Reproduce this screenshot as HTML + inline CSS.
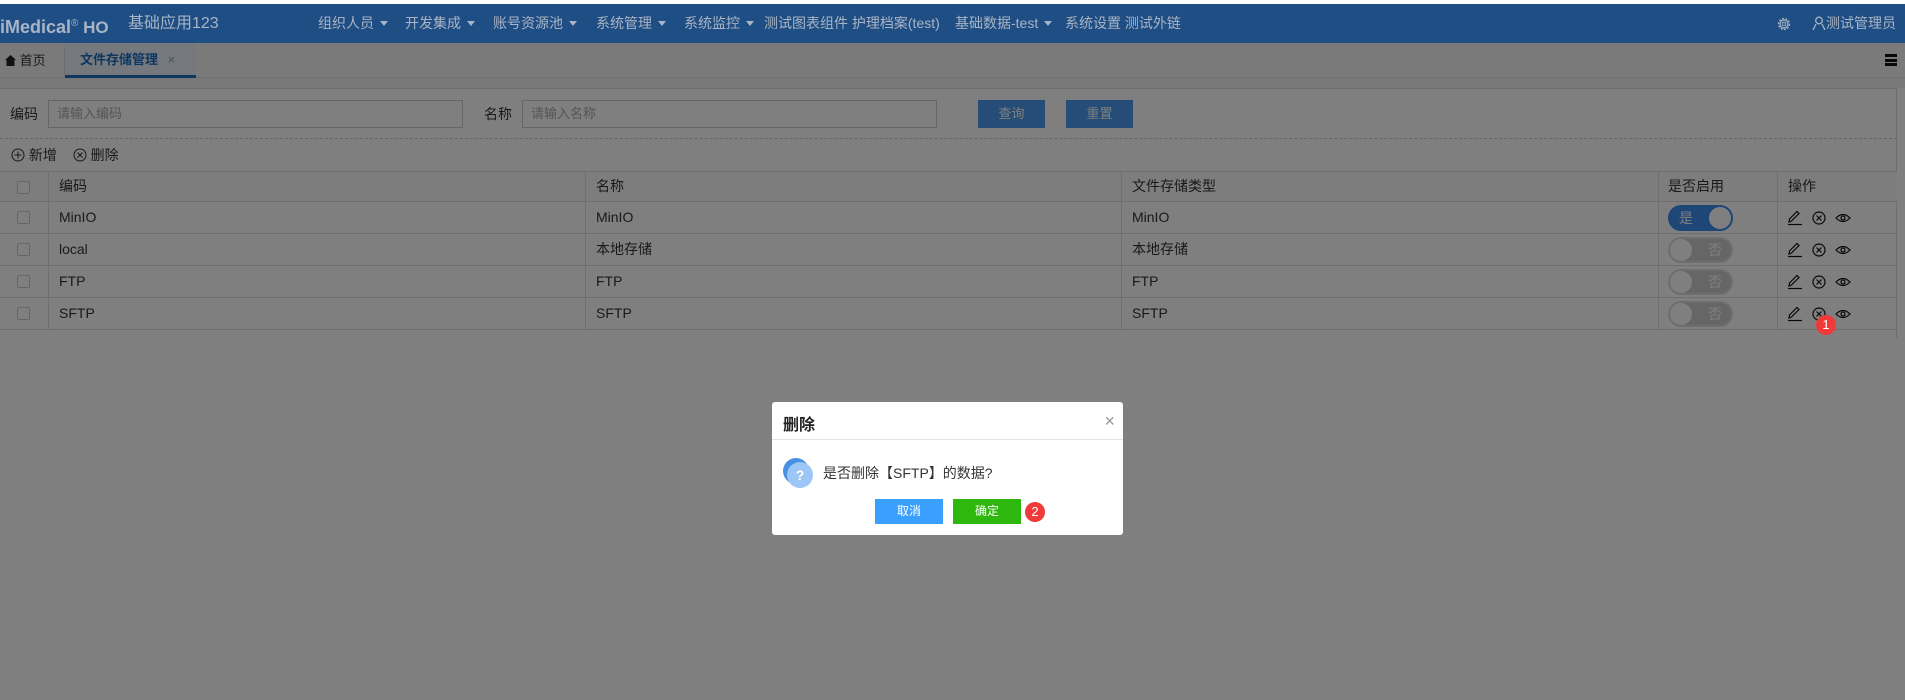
<!DOCTYPE html>
<html><head><meta charset="utf-8"><style>
*{margin:0;padding:0;box-sizing:border-box}
body{width:1905px;height:700px;position:relative;overflow:hidden;background:#fff;font-family:"Liberation Sans","Noto Sans CJK SC",sans-serif;font-size:13px;color:#333}
.a{position:absolute}
.hdr{left:0;top:4px;width:1905px;height:39px;background:#1f4e85;z-index:10}
.nav{top:4px;height:39px;line-height:39px;color:#a9b4c4;font-size:14px;white-space:nowrap;z-index:11}
.tri{display:inline-block;border-left:4px solid transparent;border-right:4px solid transparent;border-top:5px solid #a9b4c4;margin-left:6px;vertical-align:2px}
.tabbar{left:0;top:43px;width:1905px;height:35px;background:#f4f4f4;border-bottom:1px solid #e5e5e5}
.inp{height:28px;border:1px solid #ccc;background:#fff;color:#aaa;padding-left:8px;line-height:26px;font-size:13px}
.btn{height:28px;background:#4a9af0;color:#fff;text-align:center;line-height:28px;font-size:13px}
.row{left:0;width:1897px;height:32px;border-bottom:1px solid #ddd;line-height:31px;font-size:14px}
.cell{position:absolute;top:0;height:100%}
.cb{position:absolute;left:17px;top:9px;width:13px;height:13px;border:1px solid #ccc;background:#fff;border-radius:2px}
.vl{position:absolute;top:0;width:1px;height:100%;background:#ddd}
.tog{position:absolute;left:1668px;top:3px;width:65px;height:26px;border-radius:13px}
.ov{left:0;top:0;width:1905px;height:700px;background:rgba(0,0,0,.5);z-index:5}
</style></head><body>
<div class="a" style="left:0;top:0;width:1905px;height:4px;background:#fff;z-index:10"></div>
<div class="a hdr"></div>
<div class="a nav" style="left:0;font-weight:bold;font-size:18px">iMedical<sup style="font-size:10px;font-weight:normal">®</sup><span style="font-size:17px"> HO</span></div>
<div class="a nav" style="left:128px;font-size:16px">基础应用123</div>
<div class="a nav" style="left:318px">组织人员<span class="tri"></span></div>
<div class="a nav" style="left:405px">开发集成<span class="tri"></span></div>
<div class="a nav" style="left:493px">账号资源池<span class="tri"></span></div>
<div class="a nav" style="left:596px">系统管理<span class="tri"></span></div>
<div class="a nav" style="left:684px">系统监控<span class="tri"></span></div>
<div class="a nav" style="left:764px">测试图表组件 护理档案(test)</div>
<div class="a nav" style="left:955px">基础数据-test<span class="tri"></span></div>
<div class="a nav" style="left:1065px">系统设置 测试外链</div>
<svg class="a" style="left:1777px;top:17px;z-index:11" width="14" height="14" viewBox="0 0 14 14"><circle cx="7" cy="7" r="5.5" fill="none" stroke="#a9b4c4" stroke-width="1.2" stroke-dasharray="2 1.4"/><circle cx="7" cy="7" r="4" fill="none" stroke="#a9b4c4" stroke-width="1.2"/><circle cx="7" cy="7" r="1.8" fill="none" stroke="#a9b4c4"/></svg>
<div class="a nav" style="left:1812px">
<svg width="14" height="14" viewBox="0 0 14 14" style="vertical-align:-2px"><circle cx="7" cy="4.5" r="3.3" fill="none" stroke="#a9b4c4" stroke-width="1.3"/><path d="M1 14 L4 8 M13 14 L10 8" stroke="#a9b4c4" stroke-width="1.3"/></svg>测试管理员</div>

<div class="a tabbar"></div>
<div class="a" style="left:5px;top:43px;height:35px;line-height:35px;font-size:13px;color:#333">
<svg width="11" height="11" viewBox="0 0 11 11" style="vertical-align:-1px"><path d="M5.5 0 L11 5 L9.5 5 L9.5 11 L1.5 11 L1.5 5 L0 5Z" fill="#222"/></svg> 首页</div>
<div class="a" style="left:64px;top:48px;width:1px;height:28px;background:#ddd"></div>
<div class="a" style="left:65px;top:43px;width:131px;height:35px;background:#eaf2fb;border-bottom:3px solid #1b6cc0;color:#1b6cc0;font-weight:bold;line-height:34px;padding-left:15px">文件存储管理 <span style="font-weight:normal;color:#8aa;margin-left:6px">×</span></div>
<div class="a" style="left:1885px;top:54px;width:12px;height:12px;border-top:3px solid #111;border-bottom:3px solid #111"><div style="margin-top:1.5px;height:3px;background:#111"></div></div>
<div class="a" style="left:0;top:78px;width:1905px;height:10px;background:#f0f0f0"></div>
<div class="a" style="left:0;top:88px;width:1897px;height:250px;border-top:1px solid #ddd;border-right:1px solid #ddd"></div>

<div class="a" style="left:10px;top:100px;line-height:28px;font-size:14px">编码</div>
<div class="a inp" style="left:48px;top:100px;width:415px">请输入编码</div>
<div class="a" style="left:484px;top:100px;line-height:28px;font-size:14px">名称</div>
<div class="a inp" style="left:522px;top:100px;width:415px">请输入名称</div>
<div class="a btn" style="left:978px;top:100px;width:67px">查询</div>
<div class="a btn" style="left:1066px;top:100px;width:67px">重置</div>
<div class="a" style="left:0;top:138px;width:1897px;border-top:1px dashed #ccc"></div>

<div class="a" style="left:11px;top:146px;line-height:18px;font-size:14px">
<svg width="14" height="14" viewBox="0 0 14 14" style="vertical-align:-2px"><circle cx="7" cy="7" r="6" fill="none" stroke="#333"/><path d="M7 3.5V10.5M3.5 7H10.5" stroke="#333"/></svg> 新增
<span style="margin-left:12px"></span><svg width="14" height="14" viewBox="0 0 14 14" style="vertical-align:-2px"><circle cx="7" cy="7" r="6" fill="none" stroke="#333"/><path d="M4.5 4.5L9.5 9.5M9.5 4.5L4.5 9.5" stroke="#333"/></svg> 删除</div>

<div class="a" style="left:0;top:171px;width:1897px;border-top:1px solid #ddd"></div>
<div class="a row" style="top:172px;height:30px;line-height:29px;background:#fafafa">
<div class="cb"></div><div class="vl" style="left:48px"></div><div class="cell" style="left:59px">编码</div>
<div class="vl" style="left:585px"></div><div class="cell" style="left:596px">名称</div>
<div class="vl" style="left:1121px"></div><div class="cell" style="left:1132px">文件存储类型</div>
<div class="vl" style="left:1658px"></div><div class="cell" style="left:1668px">是否启用</div>
<div class="vl" style="left:1777px"></div><div class="cell" style="left:1788px">操作</div>
</div>

<div class="a row" style="top:202px"><div class="cb"></div><div class="vl" style="left:48px"></div><div class="cell" style="left:59px">MinIO</div><div class="vl" style="left:585px"></div><div class="cell" style="left:596px">MinIO</div><div class="vl" style="left:1121px"></div><div class="cell" style="left:1132px">MinIO</div><div class="vl" style="left:1658px"></div>
<div class="tog" style="background:#3d8ff0;border:2px solid #3d8ff0"><span style="position:absolute;left:9px;top:-4px;color:#fff">是</span><span style="position:absolute;right:0;top:0;width:22px;height:22px;border-radius:11px;background:#fff"></span></div><div class="vl" style="left:1777px"></div></div>
<div class="a row" style="top:234px"><div class="cb"></div><div class="vl" style="left:48px"></div><div class="cell" style="left:59px">local</div><div class="vl" style="left:585px"></div><div class="cell" style="left:596px">本地存储</div><div class="vl" style="left:1121px"></div><div class="cell" style="left:1132px">本地存储</div><div class="vl" style="left:1658px"></div>
<div class="tog" style="background:#ccc;border:2px solid #ddd"><span style="position:absolute;right:9px;top:-4px;color:#fff">否</span><span style="position:absolute;left:0;top:0;width:22px;height:22px;border-radius:11px;background:#fff"></span></div><div class="vl" style="left:1777px"></div></div>
<div class="a row" style="top:266px"><div class="cb"></div><div class="vl" style="left:48px"></div><div class="cell" style="left:59px">FTP</div><div class="vl" style="left:585px"></div><div class="cell" style="left:596px">FTP</div><div class="vl" style="left:1121px"></div><div class="cell" style="left:1132px">FTP</div><div class="vl" style="left:1658px"></div>
<div class="tog" style="background:#ccc;border:2px solid #ddd"><span style="position:absolute;right:9px;top:-4px;color:#fff">否</span><span style="position:absolute;left:0;top:0;width:22px;height:22px;border-radius:11px;background:#fff"></span></div><div class="vl" style="left:1777px"></div></div>
<div class="a row" style="top:298px"><div class="cb"></div><div class="vl" style="left:48px"></div><div class="cell" style="left:59px">SFTP</div><div class="vl" style="left:585px"></div><div class="cell" style="left:596px">SFTP</div><div class="vl" style="left:1121px"></div><div class="cell" style="left:1132px">SFTP</div><div class="vl" style="left:1658px"></div>
<div class="tog" style="background:#ccc;border:2px solid #ddd"><span style="position:absolute;right:9px;top:-4px;color:#fff">否</span><span style="position:absolute;left:0;top:0;width:22px;height:22px;border-radius:11px;background:#fff"></span></div><div class="vl" style="left:1777px"></div></div>

<svg class="a" style="left:1786px;top:209px" width="70" height="125" viewBox="0 0 70 125">
<defs><g id="ic">
<path d="M3 13 L3.5 10 L11 2.5 L13 4.5 L5.5 12 Z" fill="none" stroke="#111" stroke-width="1.2"/><path d="M2 15.5H16" stroke="#111" stroke-width="1.2"/>
<circle cx="33" cy="9" r="6" fill="none" stroke="#111" stroke-width="1.2"/><path d="M30.5 6.5L35.5 11.5M35.5 6.5L30.5 11.5" stroke="#111" stroke-width="1.2"/>
<path d="M50 9 Q57 2 64 9 Q57 16 50 9Z" fill="none" stroke="#111" stroke-width="1.2"/><circle cx="57" cy="9" r="2" fill="none" stroke="#111" stroke-width="1.2"/>
</g></defs>
<use href="#ic" y="0"/><use href="#ic" y="32"/><use href="#ic" y="64"/><use href="#ic" y="96"/>
</svg>

<div class="a ov"></div>
<div class="a" style="left:1816px;top:315px;width:20px;height:20px;border-radius:10px;background:#f03a3a;color:#fff;font-size:13px;text-align:center;line-height:20px;z-index:6">1</div>

<div class="a" style="left:772px;top:402px;width:351px;height:133px;background:#fff;border-radius:3px;z-index:6">
<div style="position:absolute;left:11px;top:9px;font-size:16px;color:#222;font-weight:bold">删除</div>
<div style="position:absolute;right:8px;top:9px;font-size:18px;color:#999">×</div>
<div style="position:absolute;left:0;top:37px;width:100%;height:1px;background:#e5e5e5"></div>
<div style="position:absolute;left:11px;top:56px;width:30px;height:30px">
<div style="position:absolute;left:0;top:0;width:26px;height:26px;border-radius:13px;background:#4a90e2"></div>
<div style="position:absolute;left:4px;top:4px;width:26px;height:26px;border-radius:13px;background:#9cc6f5;color:#fff;text-align:center;line-height:26px;font-weight:bold;font-size:14px">?</div></div>
<div style="position:absolute;left:51px;top:61px;font-size:14px;color:#333">是否删除【SFTP】的数据?</div>
<div style="position:absolute;left:103px;top:97px;width:68px;height:25px;background:#3aa0ff;color:#fff;text-align:center;line-height:25px;font-size:12px">取消</div>
<div style="position:absolute;left:181px;top:97px;width:68px;height:25px;background:#2eb80d;color:#fff;text-align:center;line-height:25px;font-size:12px">确定</div>
<div style="position:absolute;left:253px;top:100px;width:20px;height:20px;border-radius:10px;background:#f03a3a;color:#fff;font-size:13px;text-align:center;line-height:20px">2</div>
</div>
</body></html>
